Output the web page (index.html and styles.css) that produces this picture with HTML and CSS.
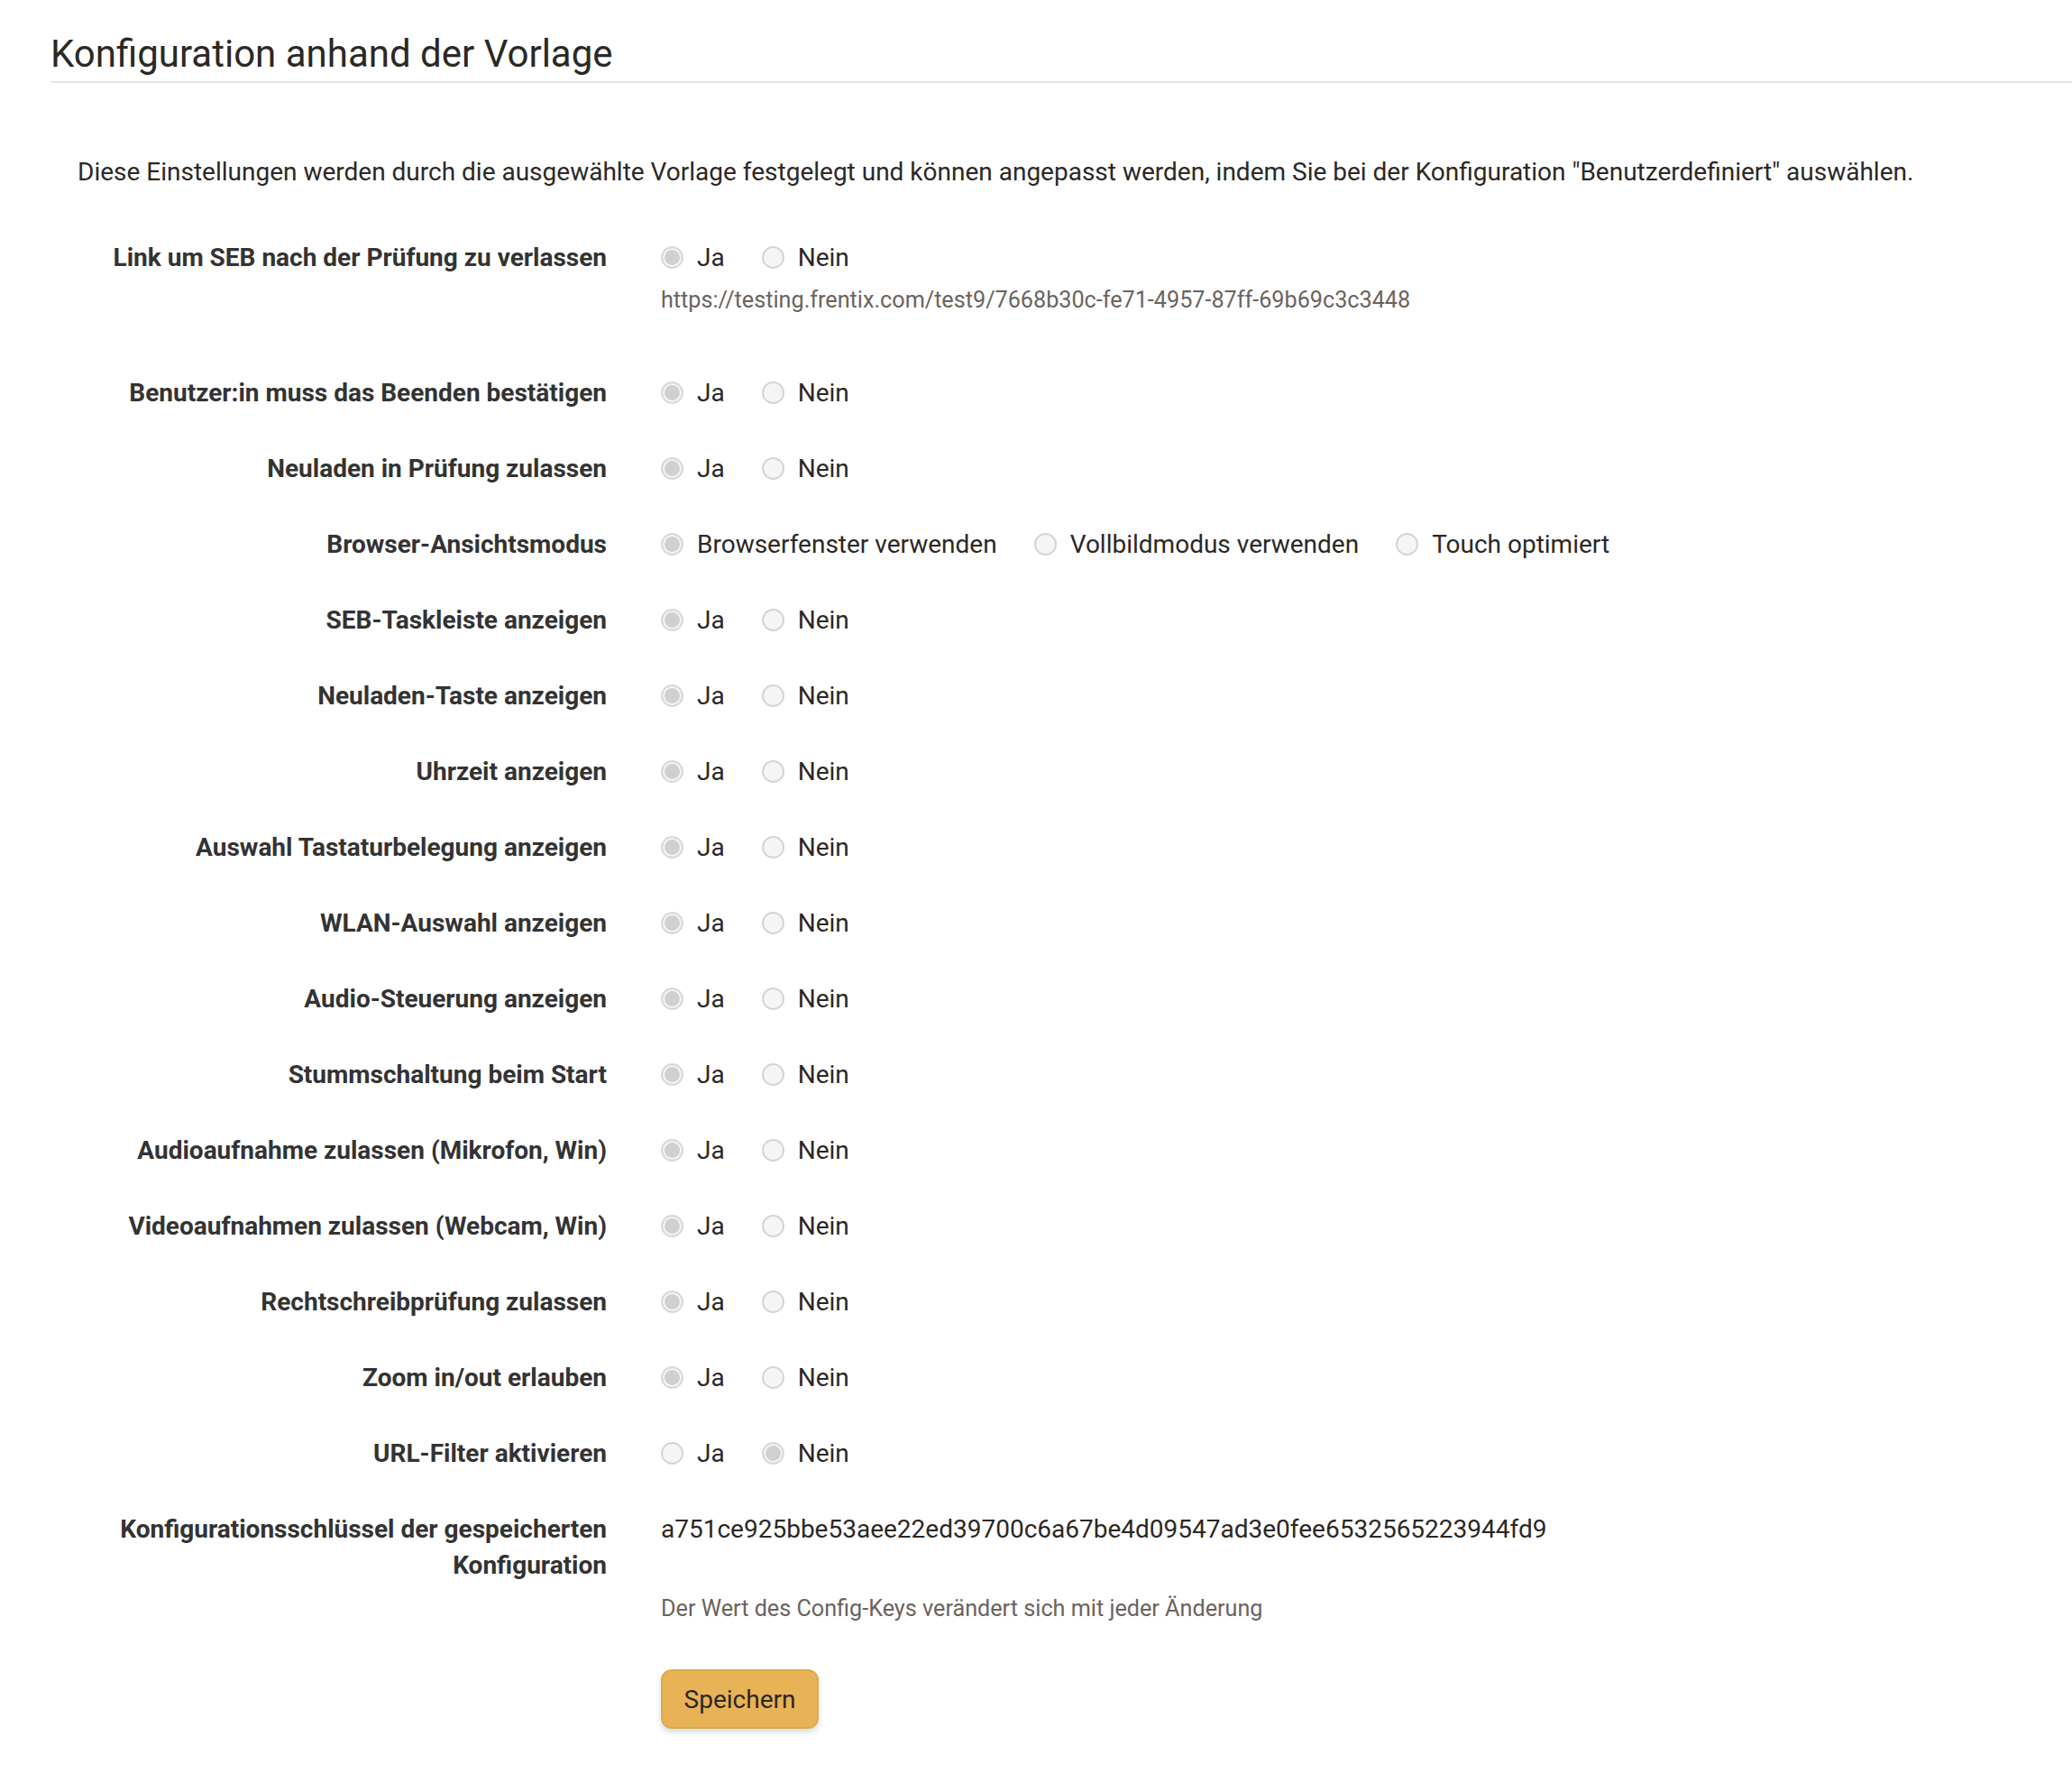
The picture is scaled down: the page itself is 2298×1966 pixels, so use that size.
FILE: index.html
```html
<!DOCTYPE html>
<html lang="de">
<head>
<meta charset="utf-8">
<title>Konfiguration anhand der Vorlage</title>
<link rel="stylesheet" href="styles.css">
</head>
<body>
<div class="page">
  <h2 class="title">Konfiguration anhand der Vorlage</h2>
  <p class="desc">Diese Einstellungen werden durch die ausgewählte Vorlage festgelegt und können angepasst werden, indem Sie bei der Konfiguration "Benutzerdefiniert" auswählen.</p>

  <div class="form">
    <div class="group">
      <div class="label">Link um SEB nach der Prüfung zu verlassen</div>
      <div class="control">
        <div class="radios"><span class="opt"><span class="radio checked"></span>Ja</span><span class="opt"><span class="radio"></span>Nein</span></div>
        <div class="url">https://testing.frentix.com/test9/7668b30c-fe71-4957-87ff-69b69c3c3448</div>
      </div>
    </div>
    <div class="group">
      <div class="label">Benutzer:in muss das Beenden bestätigen</div>
      <div class="control"><div class="radios"><span class="opt"><span class="radio checked"></span>Ja</span><span class="opt"><span class="radio"></span>Nein</span></div></div>
    </div>
    <div class="group">
      <div class="label">Neuladen in Prüfung zulassen</div>
      <div class="control"><div class="radios"><span class="opt"><span class="radio checked"></span>Ja</span><span class="opt"><span class="radio"></span>Nein</span></div></div>
    </div>
    <div class="group">
      <div class="label">Browser-Ansichtsmodus</div>
      <div class="control"><div class="radios"><span class="opt"><span class="radio checked"></span>Browserfenster verwenden</span><span class="opt"><span class="radio"></span>Vollbildmodus verwenden</span><span class="opt"><span class="radio"></span>Touch optimiert</span></div></div>
    </div>
    <div class="group">
      <div class="label">SEB-Taskleiste anzeigen</div>
      <div class="control"><div class="radios"><span class="opt"><span class="radio checked"></span>Ja</span><span class="opt"><span class="radio"></span>Nein</span></div></div>
    </div>
    <div class="group">
      <div class="label">Neuladen-Taste anzeigen</div>
      <div class="control"><div class="radios"><span class="opt"><span class="radio checked"></span>Ja</span><span class="opt"><span class="radio"></span>Nein</span></div></div>
    </div>
    <div class="group">
      <div class="label">Uhrzeit anzeigen</div>
      <div class="control"><div class="radios"><span class="opt"><span class="radio checked"></span>Ja</span><span class="opt"><span class="radio"></span>Nein</span></div></div>
    </div>
    <div class="group">
      <div class="label">Auswahl Tastaturbelegung anzeigen</div>
      <div class="control"><div class="radios"><span class="opt"><span class="radio checked"></span>Ja</span><span class="opt"><span class="radio"></span>Nein</span></div></div>
    </div>
    <div class="group">
      <div class="label">WLAN-Auswahl anzeigen</div>
      <div class="control"><div class="radios"><span class="opt"><span class="radio checked"></span>Ja</span><span class="opt"><span class="radio"></span>Nein</span></div></div>
    </div>
    <div class="group">
      <div class="label">Audio-Steuerung anzeigen</div>
      <div class="control"><div class="radios"><span class="opt"><span class="radio checked"></span>Ja</span><span class="opt"><span class="radio"></span>Nein</span></div></div>
    </div>
    <div class="group">
      <div class="label">Stummschaltung beim Start</div>
      <div class="control"><div class="radios"><span class="opt"><span class="radio checked"></span>Ja</span><span class="opt"><span class="radio"></span>Nein</span></div></div>
    </div>
    <div class="group">
      <div class="label">Audioaufnahme zulassen (Mikrofon, Win)</div>
      <div class="control"><div class="radios"><span class="opt"><span class="radio checked"></span>Ja</span><span class="opt"><span class="radio"></span>Nein</span></div></div>
    </div>
    <div class="group">
      <div class="label">Videoaufnahmen zulassen (Webcam, Win)</div>
      <div class="control"><div class="radios"><span class="opt"><span class="radio checked"></span>Ja</span><span class="opt"><span class="radio"></span>Nein</span></div></div>
    </div>
    <div class="group">
      <div class="label">Rechtschreibprüfung zulassen</div>
      <div class="control"><div class="radios"><span class="opt"><span class="radio checked"></span>Ja</span><span class="opt"><span class="radio"></span>Nein</span></div></div>
    </div>
    <div class="group">
      <div class="label">Zoom in/out erlauben</div>
      <div class="control"><div class="radios"><span class="opt"><span class="radio checked"></span>Ja</span><span class="opt"><span class="radio"></span>Nein</span></div></div>
    </div>
    <div class="group">
      <div class="label">URL-Filter aktivieren</div>
      <div class="control"><div class="radios"><span class="opt"><span class="radio"></span>Ja</span><span class="opt"><span class="radio checked"></span>Nein</span></div></div>
    </div>
    <div class="group group-key">
      <div class="label">Konfigurationsschlüssel der gespeicherten Konfiguration</div>
      <div class="control">
        <div class="value">a751ce925bbe53aee22ed39700c6a67be4d09547ad3e0fee6532565223944fd9</div>
        <div class="help">Der Wert des Config-Keys verändert sich mit jeder Änderung</div>
        <button class="btn" type="button">Speichern</button>
      </div>
    </div>
  </div>
</div>
</body>
</html>
```
FILE: styles.css
```css
html, body {
  margin: 0;
  padding: 0;
  background: #fff;
}
body {
  font-family: Roboto, "Liberation Sans", sans-serif;
  color: #2b2825;
  font-size: 28px;
  line-height: 40px;
}
.page {
  margin-left: 56px;
  padding-top: 36px;
}
.title {
  margin: 0;
  font-size: 42px;
  font-weight: 400;
  line-height: 48px;
  padding-bottom: 6px;
  border-bottom: 2px solid #e5e5e5;
  color: #2b2825;
}
.desc {
  margin: 79px 0 0 30px;
  line-height: 40px;
}
.form {
  margin-top: 55px;
}
.group {
  display: grid;
  grid-template-columns: 617px 1fr;
  column-gap: 60px;
  margin-bottom: 44px;
}
.label {
  padding-left: 30px;
  text-align: right;
  font-weight: 700;
  color: #333;
}
.radios {
  display: flex;
  align-items: center;
  height: 40px;
  column-gap: 41px;
}
.opt {
  display: flex;
  align-items: center;
  column-gap: 15px;
}
.radio {
  box-sizing: border-box;
  width: 25px;
  height: 25px;
  border-radius: 50%;
  border: 2px solid #d4d4d4;
  background: #f5f5f5;
  margin-top: -2px;
}
.radio.checked {
  border-color: #d9d9d9;
  background: #d0d0d0;
  box-shadow: inset 0 0 0 2px #f6f6f6;
}
.url {
  margin-top: 7px;
  margin-bottom: 19px;
  font-size: 25.2px;
  color: #6b635d;
}
.value {
  height: 40px;
}
.help {
  margin-top: 48px;
  font-size: 25.2px;
  color: #6b635d;
}
.btn {
  margin-top: 47px;
  box-sizing: border-box;
  width: 175px;
  height: 66px;
  font-family: inherit;
  font-size: 28px;
  color: #2b2825;
  background: #e8b257;
  border: 2px solid #e2a94a;
  border-radius: 12px;
  box-shadow: 0 4px 6px rgba(120, 150, 160, 0.3);
  padding: 0;
  cursor: pointer;
}
```
